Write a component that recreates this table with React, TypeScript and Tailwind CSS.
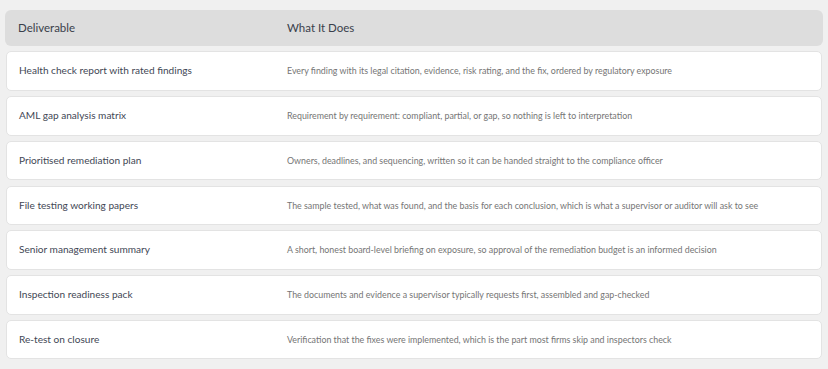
import React from "react";

const rows: [string, string][] = [
  ["Health check report with rated findings", "Every finding with its legal citation, evidence, risk rating, and the fix, ordered by regulatory exposure"],
  ["AML gap analysis matrix", "Requirement by requirement: compliant, partial, or gap, so nothing is left to interpretation"],
  ["Prioritised remediation plan", "Owners, deadlines, and sequencing, written so it can be handed straight to the compliance officer"],
  ["File testing working papers", "The sample tested, what was found, and the basis for each conclusion, which is what a supervisor or auditor will ask to see"],
  ["Senior management summary", "A short, honest board-level briefing on exposure, so approval of the remediation budget is an informed decision"],
  ["Inspection readiness pack", "The documents and evidence a supervisor typically requests first, assembled and gap-checked"],
  ["Re-test on closure", "Verification that the fixes were implemented, which is the part most firms skip and inspectors check"],
];

export default function App() {
  return (
    <div className="min-h-[369px] w-[828px] bg-[#f0f0f0] px-[5px] pt-[10px]" style={{ fontFamily: 'Lato, "Noto Sans", sans-serif' }}>
      <div className="flex flex-col gap-[5.25px]">
        <div className="flex h-[36px] items-center rounded-[6px] bg-[#dddddd] text-[11.5px] text-[#3a3f4b]">
          <div className="w-[282px] pl-[13px]">Deliverable</div>
          <div className="flex-1">What It Does</div>
        </div>
        {rows.map(([a, b]) => (
          <div key={a} className="mx-[1px] flex h-[39.5px] items-center rounded-[5px] border border-[#e3e3e3] bg-white">
            <div className="w-[280px] shrink-0 pl-[12px] text-[10.1px] text-[#424755]">{a}</div>
            <div className="flex-1 whitespace-nowrap text-[8.85px] text-[#757575]">{b}</div>
          </div>
        ))}
      </div>
    </div>
  );
}
